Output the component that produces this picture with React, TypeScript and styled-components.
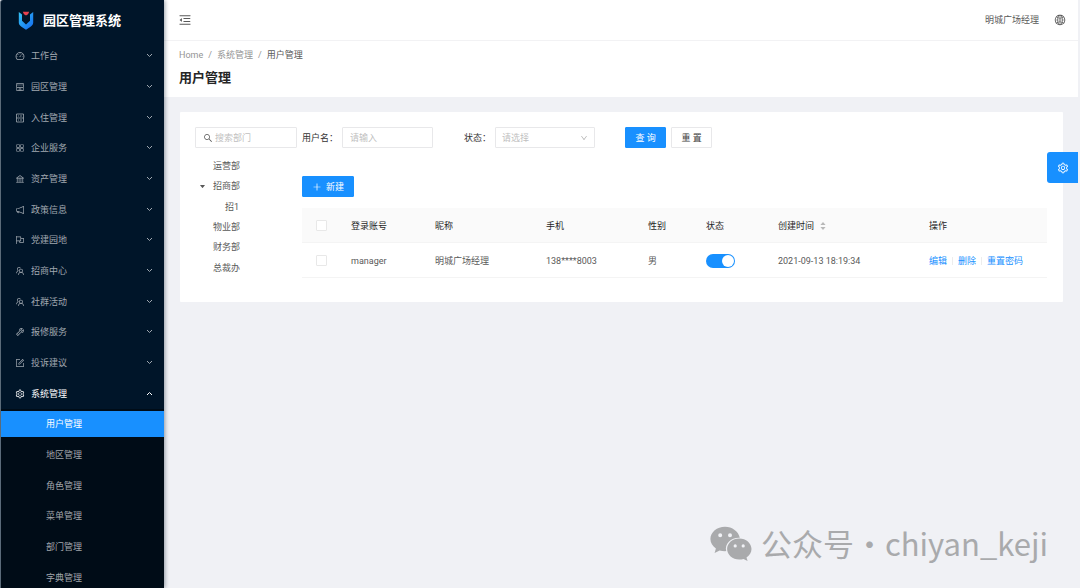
import React, { useState } from "react";
import styled, { createGlobalStyle, css } from "styled-components";
import {
  AiOutlineAppstore,
  AiOutlineBank,
  AiOutlineDashboard,
  AiOutlineDown,
  AiOutlineFlag,
  AiOutlineForm,
  AiOutlineGlobal,
  AiOutlineMenuFold,
  AiOutlineNotification,
  AiOutlinePlus,
  AiOutlineSearch,
  AiOutlineSetting,
  AiOutlineShop,
  AiOutlineTeam,
  AiOutlineTool,
  AiFillCaretDown,
} from "react-icons/ai";

const blue = "#1890ff";
const line = "#e8e8ea";

const GlobalStyle = createGlobalStyle`
  *, *::before, *::after { box-sizing: border-box; }
  body {
    margin: 0;
    background: #f0f1f5;
    color: #595959;
    font: 9px/14px Roboto, "Noto Sans CJK SC", sans-serif;
  }
  button, input, select { font: inherit; color: inherit; margin: 0; }
  ul { list-style: none; margin: 0; padding: 0; }
  a { text-decoration: none; color: inherit; }
  svg { display: block; flex: none; }
`;

const Shell = styled.div`
  display: flex;
  height: 100vh;
  overflow: hidden;
  padding-right: 2px;
`;

const Sidebar = styled.aside`
  flex: none;
  width: 164px;
  overflow: hidden;
  background: #001529;
  border-left: 1px solid #5b6b79;
  border-top-left-radius: 3px;
  box-shadow: 1px 0 4px rgba(0, 21, 41, 0.4);
  z-index: 1;
`;

const Brand = styled.a`
  display: flex;
  align-items: center;
  gap: 9px;
  height: 41px;
  padding-left: 17px;
  color: #fff;
  font-size: 13px;
  font-weight: 700;
`;

const Menu = styled.ul<{ $height: number; $nested?: boolean }>`
  display: grid;
  grid-auto-rows: 1fr;
  align-items: center;
  height: ${(p) => p.$height}px;
  ${(p) => p.$nested && css`background: #000c17;`}
`;

const MenuButton = styled.button<{ $open: boolean }>`
  display: flex;
  align-items: center;
  gap: 6px;
  width: 100%;
  height: 26px;
  padding: 0 11px 0 14px;
  border: 0;
  background: none;
  color: ${(p) => (p.$open ? "#fff" : "#a0a8b0")};
  cursor: pointer;
`;

const MenuLabel = styled.span`
  flex: 1;
  text-align: left;
`;

const SubLink = styled.a<{ $active: boolean }>`
  display: block;
  padding: 1px 0 0 45px;
  line-height: 25px;
  color: ${(p) => (p.$active ? "#fff" : "#a0a5aa")};
  ${(p) => p.$active && css`background: ${blue};`}
`;

const Main = styled.div`
  flex: 1;
  min-width: 0;
  position: relative;
`;

const TopBar = styled.header`
  display: flex;
  align-items: center;
  justify-content: space-between;
  height: 41px;
  padding: 0 12px 0 14px;
  background: #fff;
  border-bottom: 1px solid #f2f2f4;
`;

const IconButton = styled.button`
  display: flex;
  padding: 0;
  border: 0;
  background: none;
  cursor: pointer;
`;

const Account = styled.div`
  display: flex;
  align-items: center;
  gap: 15px;
`;

const PageHead = styled.div`
  height: 56px;
  padding: 7px 15px 0;
  background: #fff;
`;

const Crumbs = styled.nav`
  display: flex;
  gap: 5px;
  color: #949494;
`;

const Current = styled.span`
  color: #595959;
`;

const Title = styled.h1`
  margin: 6px 0 0;
  font-size: 13px;
  line-height: 20px;
  font-weight: 700;
  color: #262626;
`;

const Card = styled.section`
  display: flex;
  gap: 5px;
  margin: 15px 15px 15px 16px;
  padding: 15px 16px 24px 15px;
  background: #fff;
  border-radius: 1px;
`;

const Departments = styled.div`
  flex: none;
  width: 102px;
`;

const Field = styled.label`
  display: flex;
  align-items: center;
  gap: 2px;
  height: 21px;
  padding: 1px 7px 0;
  border: 1px solid ${line};
  border-radius: 1px;
  background: #fff;
`;

const TextInput = styled.input`
  flex: 1;
  width: 100%;
  min-width: 0;
  padding: 0;
  border: 0;
  outline: 0;
  background: none;
  &::placeholder { color: #bfbfbf; opacity: 1; }
`;

const Tree = styled.ul`
  display: grid;
  grid-auto-rows: 1fr;
  align-items: center;
  height: 122px;
  margin-top: 8px;
`;

const TreeItem = styled.li<{ $level: number }>`
  display: flex;
  align-items: center;
  gap: 7px;
  padding-left: ${(p) => 4 + p.$level * 12}px;
`;

const Toggle = styled.span`
  width: 7px;
`;

const Content = styled.div`
  flex: 1;
  min-width: 0;
`;

const Filters = styled.form`
  display: flex;
  align-items: center;
`;

const FilterLabel = styled.label`
  margin-right: 4px;
  padding-top: 1px;
  color: #333;
`;

const FilterField = styled(Field)`
  width: 91px;
  margin-right: 31px;
`;

const SelectBox = styled.div`
  position: relative;
  width: 100px;
  margin-right: 30px;
`;

const Select = styled.select`
  display: block;
  appearance: none;
  width: 100%;
  height: 21px;
  padding: 1px 6px 0;
  border: 1px solid ${line};
  border-radius: 1px;
  background: #fff;
  color: #bfbfbf;
`;

const SelectArrow = styled.span`
  position: absolute;
  top: 7px;
  right: 7px;
  color: #b0b0b0;
  pointer-events: none;
`;

const Button = styled.button<{ $primary?: boolean }>`
  display: flex;
  align-items: center;
  justify-content: center;
  gap: 4px;
  height: 21px;
  padding: 0 9px;
  border: 1px solid ${(p) => (p.$primary ? blue : line)};
  border-radius: 1px;
  background: ${(p) => (p.$primary ? blue : "#fff")};
  color: ${(p) => (p.$primary ? "#fff" : "#404040")};
  cursor: pointer;
`;

const FormButton = styled(Button)`
  width: 41px;
  margin-right: 5px;
`;

const Actions = styled.div`
  display: flex;
  margin: 28px 0 11px;
`;

const Table = styled.table`
  width: 100%;
  table-layout: fixed;
  border-collapse: separate;
  border-spacing: 0;
`;

const Col = styled.col<{ $w: number }>`
  width: ${(p) => p.$w}px;
`;

const Th = styled.th`
  height: 35px;
  padding: 1px 10px 0;
  background: #fafafa;
  border-bottom: 1px solid #f4f4f4;
  text-align: left;
  font-weight: 400;
  color: #262626;
  white-space: nowrap;
`;

const Td = styled.td`
  height: 35px;
  padding: 1px 10px 0;
  border-bottom: 1px solid #f4f4f4;
  white-space: nowrap;
`;

const Check = styled.input`
  display: block;
  appearance: none;
  width: 11px;
  height: 11px;
  margin: 0 auto;
  border: 1px solid #e8e8e8;
  border-radius: 1px;
  background: #fff;
  &:checked { background: ${blue}; }
`;

const Switch = styled.input`
  display: flex;
  appearance: none;
  width: 29px;
  height: 14px;
  padding: 1px;
  border-radius: 7px;
  background: #bfbfbf;
  cursor: pointer;
  &::before {
    content: "";
    width: 12px;
    height: 12px;
    border-radius: 6px;
    background: #fff;
  }
  &:checked { background: ${blue}; justify-content: flex-end; }
`;

const Sorter = styled.span`
  display: flex;
  align-items: center;
  gap: 6px;
`;

const Links = styled.div`
  display: flex;
  align-items: center;
  color: ${blue};
  a + a {
    margin-left: 5px;
    padding-left: 6px;
    background: linear-gradient(#ededed, #ededed) left center / 1px 8px no-repeat;
  }
`;

const SettingsTab = styled.button`
  position: absolute;
  top: 152px;
  right: 0;
  display: flex;
  align-items: center;
  justify-content: center;
  width: 31px;
  height: 31px;
  padding: 0;
  border: 0;
  border-radius: 3px 0 0 3px;
  background: ${blue};
  color: #fff;
  cursor: pointer;
`;

const Watermark = styled.div`
  position: absolute;
  right: 30px;
  bottom: 22px;
  display: flex;
  align-items: center;
  gap: 9px;
  color: #a9aaac;
  font: 400 31px/46px "Noto Sans CJK SC", sans-serif;
`;

const Dot = styled.span`
  display: flex;
  justify-content: center;
  width: 13px;
`;

const Logo = () => (
  <svg width="16" height="19" viewBox="0 0 16 19" aria-hidden="true">
    <defs>
      <linearGradient id="shield" x1="0" y1="0" x2="1" y2="1">
        <stop offset="0" stopColor="#35c4f5" />
        <stop offset="1" stopColor="#1268f0" />
      </linearGradient>
    </defs>
    <path
      d="M.8 1 4 3.400V9.800L8 13.600 12 9.800V3.400L15.200 1V11.800C15.200 13.600 14 14.800 12.200 16L8 18.800 3.800 16C2 14.800.8 13.600.8 11.800Z"
      fill="url(#shield)"
    />
    <path d="M4.800.8H11.200L10 3.200 8 4.600 6 3.200Z" fill="#e8414d" />
  </svg>
);

const Chevron = ({ up }: { up?: boolean }) => (
  <svg width="7" height="6" viewBox="0 0 7 6" fill="none" stroke="currentColor" strokeWidth="1" aria-hidden="true">
    <path d={up ? "M1 4 3.500 1.500 6 4" : "M1 1 3.500 3.500 6 1"} />
  </svg>
);

const Ledger = ({ size }: { size: number }) => (
  <svg width={size} height={size} viewBox="0 0 20 20" fill="none" stroke="currentColor" strokeWidth="1.600" aria-hidden="true">
    <path d="M3 2H17V18H3ZM3 10H17M6 6H8M10 6H14M6 14H8M10 14H14" />
  </svg>
);

const SortArrows = () => (
  <svg width="6" height="8" viewBox="0 0 6 8" fill="#b8b8b8" aria-hidden="true">
    <path d="M3 0 5.600 3H.4ZM3 8 .4 5H5.600Z" />
  </svg>
);

const WeChat = () => (
  <svg width="42" height="35" viewBox="0 0 42 35" fill="currentColor" aria-hidden="true">
    <path
      fillRule="evenodd"
      d="M15 .8C7 .8.4 6.200.4 13.100c0 3.900 2.200 7.200 5.500 9.500L4.600 27l5-2.600c1.800.5 3.400.8 5.400.8l1.200-.1c-1.800-7.100 4.700-13.300 12.700-13.300h.9C28.500 5.500 22.300.8 15 .8ZM10.200 7.200a2 2 0 1 1 0 4 2 2 0 0 1 0-4Zm9.800 0a2 2 0 1 1 0 4 2 2 0 0 1 0-4Z"
    />
    <path
      fillRule="evenodd"
      d="M29.300 12.600c-6.800 0-12.200 4.700-12.200 10.500s5.400 10.500 12.200 10.500c1.500 0 2.900-.3 4.200-.7l4.100 2.100-1.100-3.600c3-2 5-4.900 5-8.300 0-5.800-5.500-10.500-12.200-10.500Zm-4.100 5.700a1.600 1.600 0 1 1 0 3.200 1.600 1.600 0 0 1 0-3.200Zm8 0a1.600 1.600 0 1 1 0 3.200 1.600 1.600 0 0 1 0-3.200Z"
    />
  </svg>
);

const menu = [
  { label: "工作台", Icon: AiOutlineDashboard },
  { label: "园区管理", Icon: AiOutlineShop },
  { label: "入住管理", Icon: Ledger },
  { label: "企业服务", Icon: AiOutlineAppstore },
  { label: "资产管理", Icon: AiOutlineBank },
  { label: "政策信息", Icon: AiOutlineNotification },
  { label: "党建园地", Icon: AiOutlineFlag },
  { label: "招商中心", Icon: AiOutlineTeam },
  { label: "社群活动", Icon: AiOutlineTeam },
  { label: "报修服务", Icon: AiOutlineTool },
  { label: "投诉建议", Icon: AiOutlineForm },
  { label: "系统管理", Icon: AiOutlineSetting, open: true },
];

const submenu = ["用户管理", "地区管理", "角色管理", "菜单管理", "部门管理", "字典管理"];

const departments = [
  { name: "运营部", level: 0 },
  { name: "招商部", level: 0, expanded: true },
  { name: "招1", level: 1 },
  { name: "物业部", level: 0 },
  { name: "财务部", level: 0 },
  { name: "总裁办", level: 0 },
];

const columns = [39, 84, 111, 102, 58, 72, 151, 128];

export default function App() {
  const [enabled, setEnabled] = useState(true);

  return (
    <>
      <GlobalStyle />
      <Shell>
        <Sidebar>
          <Brand href="#">
            <Logo />
            园区管理系统
          </Brand>
          <Menu $height={368}>
            {menu.map(({ label, Icon, open }) => (
              <li key={label}>
                <MenuButton type="button" $open={!!open} aria-expanded={!!open}>
                  <Icon size={10} />
                  <MenuLabel>{label}</MenuLabel>
                  <Chevron up={open} />
                </MenuButton>
              </li>
            ))}
          </Menu>
          <Menu $height={184} $nested>
            {submenu.map((label, i) => (
              <li key={label}>
                <SubLink href="#" $active={i === 0}>{label}</SubLink>
              </li>
            ))}
          </Menu>
        </Sidebar>

        <Main>
          <TopBar>
            <IconButton type="button" aria-label="收起菜单">
              <AiOutlineMenuFold size={14} />
            </IconButton>
            <Account>
              <span>明城广场经理</span>
              <IconButton type="button" aria-label="语言">
                <AiOutlineGlobal size={12} />
              </IconButton>
            </Account>
          </TopBar>

          <PageHead>
            <Crumbs>
              <a href="#">Home</a>
              <span>/</span>
              <a href="#">系统管理</a>
              <span>/</span>
              <Current>用户管理</Current>
            </Crumbs>
            <Title>用户管理</Title>
          </PageHead>

          <Card>
            <Departments>
              <Field>
                <AiOutlineSearch size={10} />
                <TextInput placeholder="搜索部门" aria-label="搜索部门" />
              </Field>
              <Tree>
                {departments.map((d) => (
                  <TreeItem key={d.name} $level={d.level}>
                    <Toggle>{d.expanded && <AiFillCaretDown size={7} />}</Toggle>
                    {d.name}
                  </TreeItem>
                ))}
              </Tree>
            </Departments>

            <Content>
              <Filters onSubmit={(e) => e.preventDefault()}>
                <FilterLabel htmlFor="username">用户名：</FilterLabel>
                <FilterField as="div">
                  <TextInput id="username" placeholder="请输入" />
                </FilterField>
                <FilterLabel htmlFor="status">状态：</FilterLabel>
                <SelectBox>
                  <Select id="status" defaultValue="">
                    <option value="">请选择</option>
                  </Select>
                  <SelectArrow>
                    <AiOutlineDown size={8} />
                  </SelectArrow>
                </SelectBox>
                <FormButton type="submit" $primary>查 询</FormButton>
                <FormButton type="reset">重 置</FormButton>
              </Filters>

              <Actions>
                <Button type="button" $primary>
                  <AiOutlinePlus size={10} />
                  新建
                </Button>
              </Actions>

              <Table>
                <colgroup>
                  {columns.map((w, i) => (
                    <Col key={i} $w={w} />
                  ))}
                </colgroup>
                <thead>
                  <tr>
                    <Th><Check type="checkbox" aria-label="全选" /></Th>
                    <Th>登录账号</Th>
                    <Th>昵称</Th>
                    <Th>手机</Th>
                    <Th>性别</Th>
                    <Th>状态</Th>
                    <Th>
                      <Sorter>
                        创建时间
                        <SortArrows />
                      </Sorter>
                    </Th>
                    <Th>操作</Th>
                  </tr>
                </thead>
                <tbody>
                  <tr>
                    <Td><Check type="checkbox" aria-label="选择 manager" /></Td>
                    <Td>manager</Td>
                    <Td>明城广场经理</Td>
                    <Td>138****8003</Td>
                    <Td>男</Td>
                    <Td>
                      <Switch
                        type="checkbox"
                        role="switch"
                        aria-label="状态"
                        checked={enabled}
                        onChange={(e) => setEnabled(e.target.checked)}
                      />
                    </Td>
                    <Td>2021-09-13 18:19:34</Td>
                    <Td>
                      <Links>
                        <a href="#">编辑</a>
                        <a href="#">删除</a>
                        <a href="#">重置密码</a>
                      </Links>
                    </Td>
                  </tr>
                </tbody>
              </Table>
            </Content>
          </Card>

          <SettingsTab type="button" aria-label="设置">
            <AiOutlineSetting size={12} />
          </SettingsTab>

          <Watermark>
            <WeChat />
            <span>公众号</span>
            <Dot>·</Dot>
            <span>chiyan_keji</span>
          </Watermark>
        </Main>
      </Shell>
    </>
  );
}
